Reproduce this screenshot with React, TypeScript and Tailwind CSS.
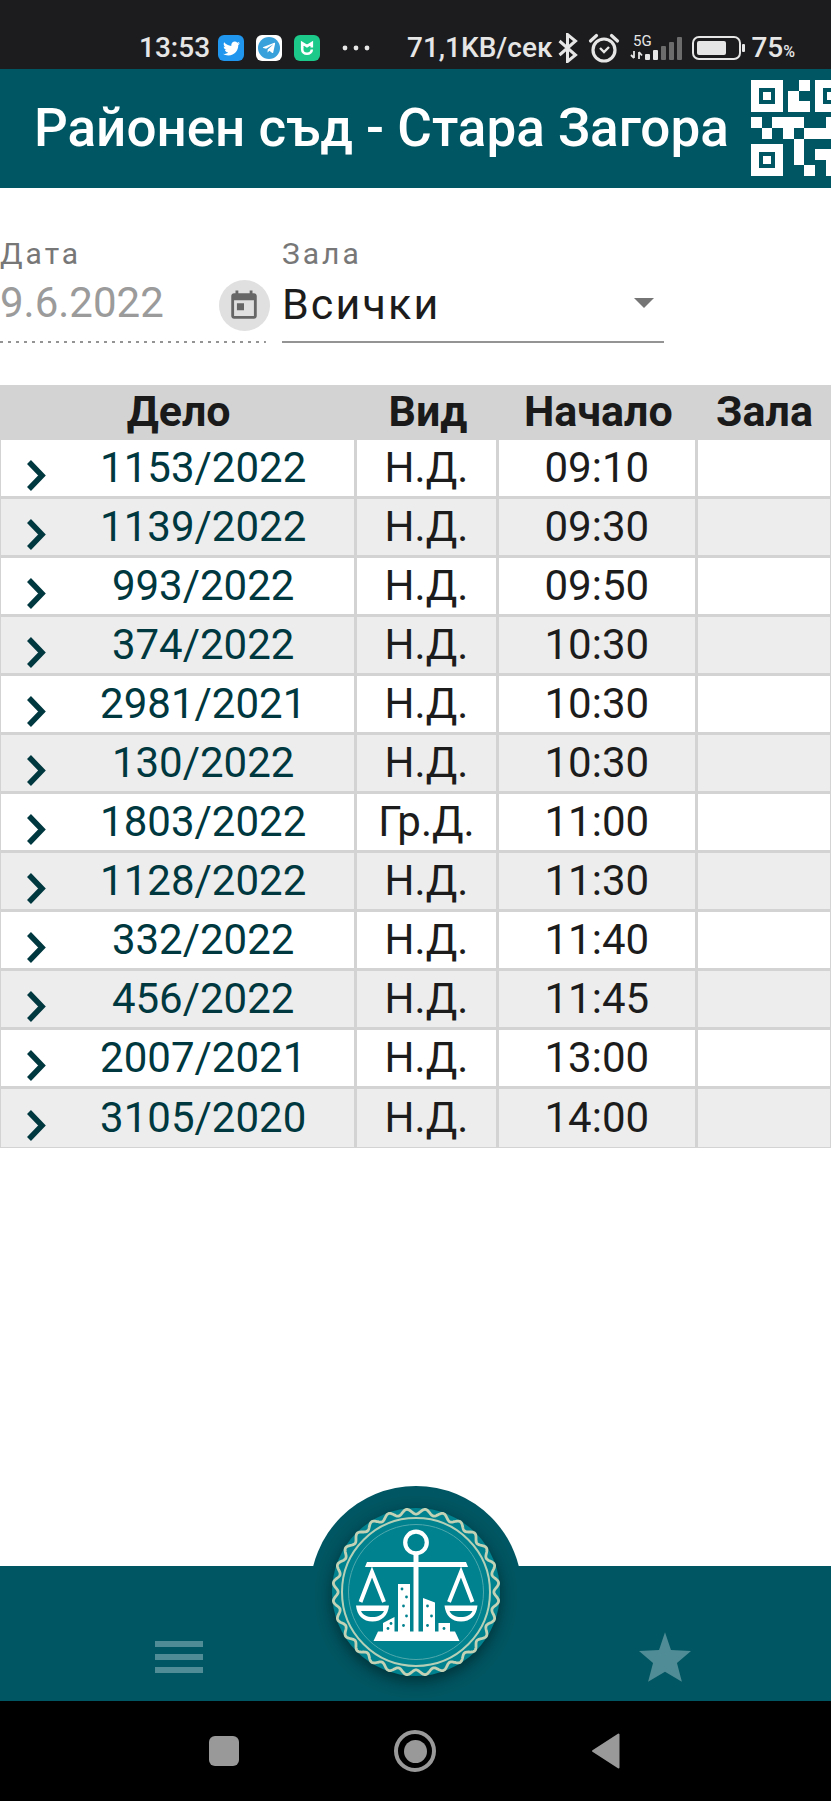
import React from "react";
import { FaTwitter, FaTelegramPlane } from "react-icons/fa";

const cases = [
  { id: "1153/2022", kind: "Н.Д.", start: "09:10", room: "" },
  { id: "1139/2022", kind: "Н.Д.", start: "09:30", room: "" },
  { id: "993/2022", kind: "Н.Д.", start: "09:50", room: "" },
  { id: "374/2022", kind: "Н.Д.", start: "10:30", room: "" },
  { id: "2981/2021", kind: "Н.Д.", start: "10:30", room: "" },
  { id: "130/2022", kind: "Н.Д.", start: "10:30", room: "" },
  { id: "1803/2022", kind: "Гр.Д.", start: "11:00", room: "" },
  { id: "1128/2022", kind: "Н.Д.", start: "11:30", room: "" },
  { id: "332/2022", kind: "Н.Д.", start: "11:40", room: "" },
  { id: "456/2022", kind: "Н.Д.", start: "11:45", room: "" },
  { id: "2007/2021", kind: "Н.Д.", start: "13:00", room: "" },
  { id: "3105/2020", kind: "Н.Д.", start: "14:00", room: "" },
];

const cell = "border-r-3 border-b-3 border-[#d3d3d3] p-0 group-last:border-b";

function StatusBar() {
  return (
    <div className="flex h-[69px] items-end justify-between bg-[#1c1c1e] pr-9 pb-1 pl-[139px] text-[28px] leading-[34px] font-medium text-[#e6e6e6]">
      <div className="flex items-center">
        <span className="mr-2">13:53</span>
        <span className="mr-3 flex size-[26px] items-center justify-center rounded-md bg-[#2196ee] text-white">
          <FaTwitter size={17} />
        </span>
        <span className="mr-3 flex size-[26px] items-center justify-center rounded-md bg-white">
          <span className="flex size-[22px] items-center justify-center rounded-full bg-[#38a0da] text-white">
            <FaTelegramPlane size={14} />
          </span>
        </span>
        <span className="mr-[22px] flex size-[26px] items-center justify-center rounded-md bg-[#1cc98a]">
          <svg viewBox="0 0 26 26" className="size-[26px]" fill="none" stroke="#fff" strokeWidth="2.6">
            <path d="M8.200 12.500V8.200l4.800 3 4.800-3v4.300" />
            <path d="M8.200 12v2.500a4.800 4.200 0 0 0 9.600 0" />
          </svg>
        </span>
        <svg viewBox="0 0 28 6" className="h-1.5 w-7" fill="#e6e6e6">
          <circle cx="3" cy="3" r="2.4" />
          <circle cx="14" cy="3" r="2.4" />
          <circle cx="25" cy="3" r="2.4" />
        </svg>
      </div>
      <div className="flex items-center">
        <span>71,1KB/сек</span>
        <svg viewBox="0 0 20 30" className="mr-2.5 ml-1.5 h-[30px] w-5" fill="none" stroke="#e6e6e6" strokeWidth="3">
          <path d="M1.500 8l16 14-8 6.500v-27l8 6.500-16 14" />
        </svg>
        <svg viewBox="0 0 32 30" className="mr-2.5 h-[30px] w-8" fill="none" stroke="#e6e6e6" strokeWidth="3.2">
          <circle cx="16" cy="17" r="11" />
          <path d="M12 15l4 4 5-5" strokeWidth="2.4" />
          <path d="M2.500 8l6-5.500M29.500 8l-6-5.500" strokeLinecap="round" />
        </svg>
        <svg viewBox="0 0 52 30" className="mr-2.5 h-[30px] w-[52px]" fill="#e6e6e6">
          <text x="3" y="13" fontSize="15" fontWeight="400" fontFamily="Roboto">5G</text>
          <path d="M4 18v7M1 22l3 3M9 26v-7M12 22.500l-3-3.500" stroke="#e6e6e6" strokeWidth="1.800" />
          <rect x="15" y="21" width="5" height="6" rx="1" />
          <rect x="23" y="17" width="5" height="10" rx="1" />
          <g fill="#6c6c6d">
            <rect x="31" y="13" width="5" height="14" rx="1" />
            <rect x="39" y="9" width="5" height="18" rx="1" />
            <rect x="47" y="4" width="5" height="23" rx="1" />
          </g>
        </svg>
        <svg viewBox="0 0 53 24" className="mr-1.5 h-6 w-[53px]" fill="#e6e6e6">
          <rect x="1" y="1" width="47" height="22" rx="6" fill="none" stroke="#e6e6e6" strokeWidth="2" />
          <rect x="5" y="5" width="29" height="14" rx="2" />
          <rect x="50" y="8" width="3" height="8" rx="1" />
        </svg>
        <span>75</span>
        <span className="mt-2 text-[16px] leading-5">%</span>
      </div>
    </div>
  );
}

function QrIcon() {
  return (
    <svg viewBox="0 0 96 96" className="size-24 shrink-0" fill="#fff" fillRule="evenodd">
      <path d="M0 0h32v32H0zM8 8v16h16V8zM12 12h8v8h-8z" />
      <path d="M64 0h32v32H64zM72 8v16h16V8zM76 12h8v8h-8z" />
      <path d="M0 64h32v32H0zM8 72v16h16V72zM12 76h8v8h-8z" />
      <path d="M48 0h11v11H48v10h11v11H37V11h11z" />
      <path d="M0 37h11v11H0zM11 48h10v11H11z" />
      <path d="M21 37h32v11H43v11H32V48H21z" />
      <path d="M53 37v11H43V37zM43 37h10v11H43zM53 48h22V37h21v22H53zM43 59h10v26H43zM53 85h11v11H53z" />
      <path d="M64 69h21v27H75V80H64z" />
    </svg>
  );
}

function CalendarIcon() {
  return (
    <svg viewBox="0 0 24 24" className="size-[34px]" fill="#666">
      <path d="M19 3h-1V1h-2v2H8V1H6v2H5c-1.110 0-1.990.9-1.990 2L3 19c0 1.100.89 2 2 2h14c1.100 0 2-.9 2-2V5c0-1.100-.9-2-2-2zm0 16H5V8h14v11zM7 10h5v5H7z" />
    </svg>
  );
}

function Emblem() {
  const points: string[] = [];
  for (let i = 0; i <= 720; i++) {
    const a = (i / 720) * Math.PI * 2;
    const r = 80.5 - 2.6 * Math.cos(a * 28);
    points.push(`${(85 + r * Math.sin(a)).toFixed(2)},${(85 - r * Math.cos(a)).toFixed(2)}`);
  }
  return (
    <svg viewBox="0 0 170 170" className="size-[170px] drop-shadow-[0_5px_8px_rgba(0,0,0,0.45)]">
      <circle cx="85" cy="85" r="84" fill="#00828f" />
      <polygon points={points.join(" ")} fill="none" stroke="#c3d2b4" strokeWidth="2.8" />
      <circle cx="85" cy="85" r="74" fill="none" stroke="#b4d0b6" strokeWidth="2" />
      <circle cx="85" cy="85" r="67.500" fill="none" stroke="#4fa8ac" strokeWidth="1" />
      <g fill="none" stroke="#fff">
        <circle cx="85" cy="35.500" r="10.800" strokeWidth="4.200" />
        <path d="M85 47v80" strokeWidth="5" />
        <path d="M29.500 95L41 65l12 30M118 95l12-30 11.500 30" strokeWidth="4" />
      </g>
      <g fill="#fff" fillRule="evenodd">
        <path d="M36 55h99l2 5H34z" />
        <path d="M25 98.500h33c-1 10-7 16-16.500 16S26 108.500 25 98.500zM30 104c2 4 6 6 11.500 6s9.500-2 11.500-6z" />
        <path d="M113.500 98.500h33c-1 10-7 16-16.500 16s-15.500-6-16.500-16zM118.500 104c2 4 6 6 11.500 6s9.500-2 11.500-6z" />
        <path d="M47 124.500h77l4.500 9.500h-86z" />
        <path d="M52 126v-10l11.500-6v16zM67 126V77h12v49zM92 126V91l12 4.500V126zM107.500 126v-10H119v10z" />
      </g>
      <g fill="#00828f">
        <circle cx="71" cy="82" r="1.400" /><circle cx="75.500" cy="90" r="1.400" />
        <circle cx="72.500" cy="99" r="1.400" /><circle cx="75.500" cy="109" r="1.400" />
        <circle cx="72.500" cy="118.500" r="1.400" /><circle cx="96.500" cy="99" r="1.400" />
        <circle cx="100.500" cy="109" r="1.400" /><circle cx="96.500" cy="118.500" r="1.400" />
        <circle cx="57" cy="121.500" r="1.400" /><circle cx="60" cy="116.500" r="1.400" />
        <circle cx="113" cy="121.500" r="1.400" />
      </g>
    </svg>
  );
}

export default function App() {
  return (
    <div className="flex min-h-screen flex-col overflow-x-hidden bg-white font-[Roboto,sans-serif] text-[#1c1c1c]">
      <StatusBar />
      <header className="flex h-[119px] items-center gap-[22px] overflow-hidden bg-[#005662] pb-0.5 pl-[34px]">
        <h1 className="shrink-0 text-[53px] leading-[60px] font-medium whitespace-nowrap text-white">
          Районен съд - Стара Загора
        </h1>
        <button type="button" aria-label="QR" className="shrink-0">
          <QrIcon />
        </button>
      </header>

      <main className="flex-1">
        <form className="flex gap-4 pt-12">
          <div className="w-[32%]">
            <label htmlFor="date" className="block text-[30px] leading-9 tracking-widest text-[#777]">
              Дата
            </label>
            <div className="flex h-[69px] items-start justify-between">
              <input
                id="date"
                type="text"
                readOnly
                defaultValue="9.6.2022"
                className="h-[60px] w-[200px] text-[42px] text-[#9b9b9b] outline-none"
              />
              <button
                type="button"
                aria-label="Календар"
                className="mt-2 -mr-1 flex size-[51px] shrink-0 items-center justify-center rounded-full bg-[#e0e0e0]"
              >
                <CalendarIcon />
              </button>
            </div>
            <svg className="h-0.5 w-full" aria-hidden="true">
              <line x1="0" y1="1" x2="100%" y2="1" stroke="#949494" strokeWidth="2" strokeDasharray="3 5" />
            </svg>
          </div>
          <div className="w-[46%]">
            <label htmlFor="room" className="block text-[30px] leading-9 tracking-widest text-[#777]">
              Зала
            </label>
            <div className="flex h-[71px] items-start border-b-2 border-[#949494]">
              <select
                id="room"
                className="h-[60px] w-full appearance-none text-[43px] tracking-wider outline-none"
              >
                <option>Всички</option>
              </select>
              <svg viewBox="0 0 20 10" className="mt-[26px] mr-2.5 h-2.5 w-5 shrink-0" fill="#757575">
                <path d="M0 0h20L10 10z" />
              </svg>
            </div>
          </div>
        </form>

        <table className="mt-[42px] w-full table-fixed border-separate border-spacing-0 text-center text-[42px] leading-[50px]">
          <colgroup>
            <col className="w-[43%]" />
            <col className="w-[17%]" />
            <col className="w-[24%]" />
            <col className="w-[16%]" />
          </colgroup>
          <thead>
            <tr className="h-[55px] bg-[#d3d3d3] text-[43px] text-[#1a1a1a]">
              <th className="p-0 pb-1 font-bold">Дело</th>
              <th className="p-0 pb-1 font-bold">Вид</th>
              <th className="p-0 pb-1 font-bold">Начало</th>
              <th className="p-0 pb-1 font-bold">Зала</th>
            </tr>
          </thead>
          <tbody>
            {cases.map((c) => (
              <tr key={c.id} className="group h-[59px] odd:bg-white even:bg-[#ededed]">
                <td className={`${cell} border-l text-[#003840]`}>
                  <a href={`#${c.id}`} className="flex items-center pl-[26px]">
                    <svg viewBox="0 0 19 31" className="mt-[14px] h-[31px] w-[19px]" fill="none" stroke="#003840" strokeWidth="5.500">
                      <path d="M2 2l13 13.500L2 29" />
                    </svg>
                    <span className="flex-1 pl-1.5">{c.id}</span>
                  </a>
                </td>
                <td className={cell}>{c.kind}</td>
                <td className={cell}>{c.start}</td>
                <td className="border-r border-b-3 border-[#d3d3d3] p-0 group-last:border-b">{c.room}</td>
              </tr>
            ))}
          </tbody>
        </table>
      </main>

      <footer>
        <nav className="relative grid h-[135px] grid-cols-[43%_1fr_40%] items-end bg-[#005662] pb-[18px]">
          <button type="button" aria-label="Меню" className="flex h-[52px] items-center justify-center">
            <svg viewBox="0 0 48 32" className="h-8 w-12" fill="#4f8c95">
              <path d="M0 0h48v6H0zM0 13h48v6H0zM0 26h48v6H0z" />
            </svg>
          </button>
          <span />
          <button type="button" aria-label="Любими" className="flex h-[52px] items-center justify-center">
            <svg viewBox="2 2 20 19" className="h-[50px] w-[52px]" fill="#4f8c95">
              <path d="M12 2l2.300 6.800L22 9.200l-5.400 4.600L18.500 21 12 17.200 5.500 21l1.900-7.200L2 9.200l7.700-.4z" />
            </svg>
          </button>
          <div className="pointer-events-none absolute inset-x-0 -top-20 flex h-20 justify-center overflow-hidden">
            <div className="size-[212px] shrink-0 rounded-full bg-[#005662]" />
          </div>
          <button type="button" aria-label="Начало" className="absolute -top-[59px] left-1/2 -translate-x-1/2 rounded-full">
            <Emblem />
          </button>
        </nav>
        <div className="flex h-[100px] items-center justify-center gap-[155px] bg-black pr-0.5">
          <button type="button" aria-label="Последни" className="size-[30px] rounded-md bg-[#999]" />
          <button type="button" aria-label="Начален екран" className="flex size-[42px] items-center justify-center rounded-full border-4 border-[#999]">
            <span className="size-[23px] rounded-full bg-[#999]" />
          </button>
          <button type="button" aria-label="Назад">
            <svg viewBox="0 0 29 36" className="h-9 w-[29px]" fill="#999" stroke="#999" strokeWidth="2" strokeLinejoin="round">
              <path d="M2 18L27.500 1.500v33z" />
            </svg>
          </button>
        </div>
      </footer>
    </div>
  );
}
